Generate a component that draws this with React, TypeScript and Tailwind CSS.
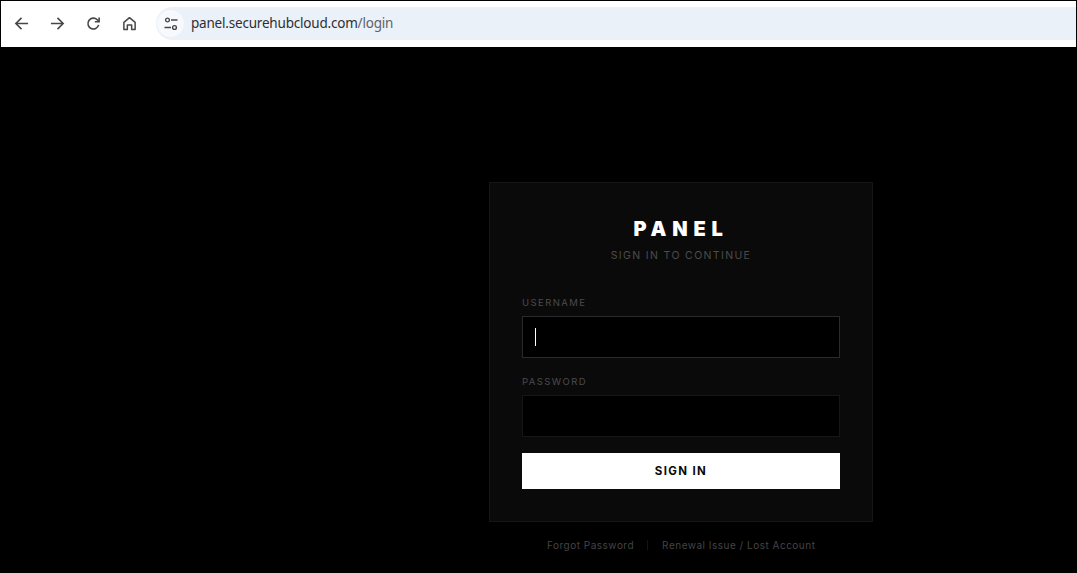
export default function App() {
  return (
    <div className="h-[573px] w-[1077px] overflow-hidden bg-black font-['Inter',sans-serif]">
      <header className="mx-px mt-px flex h-[46px] items-start bg-white">
        <nav className="flex h-[44px] items-center pl-[11px] text-[#474747]">
          <button className="flex w-[18px] justify-center">
            <svg width="15" height="15" viewBox="0 0 16 16" fill="none" stroke="currentColor" strokeWidth="1.7">
              <path d="M15 8H2M8 2L2 8l6 6" />
            </svg>
          </button>
          <button className="ml-[18px] flex w-[18px] justify-center">
            <svg width="15" height="15" viewBox="0 0 16 16" fill="none" stroke="currentColor" strokeWidth="1.7">
              <path d="M1 8h13M8 2l6 6-6 6" />
            </svg>
          </button>
          <button className="ml-[18px] flex w-[18px] justify-center">
            <svg width="15" height="15" viewBox="0 0 16 16" fill="none" stroke="currentColor" strokeWidth="1.7">
              <path d="M13.5 9.5A5.8 5.8 0 1 1 12 4l1.600 1.600" />
              <path d="M14 1.500v4.600H9.400" />
            </svg>
          </button>
          <button className="ml-[18px] flex w-[18px] justify-center">
            <svg width="15" height="15" viewBox="0 0 16 16" fill="none" stroke="currentColor" strokeWidth="1.6" strokeLinejoin="round">
              <path d="M2 14.500V6.800L8 1.800l6 5v7.700h-3.700V9.500H5.700v5z" />
            </svg>
          </button>
        </nav>
        <div className="ml-[18px] mt-[6px] flex h-[33px] flex-1 items-center rounded-l-[17px] bg-[#ebf1f9]">
          <div className="ml-[1px] flex h-[27px] w-[27px] items-center justify-center rounded-full bg-[#f7f9fc] text-[#474747]">
            <svg width="14" height="14" viewBox="0 0 14 14" fill="none" stroke="currentColor" strokeWidth="1.4">
              <circle cx="3.500" cy="3" r="1.900" />
              <path d="M7 3h6.500M0.500 10.500H7" />
              <circle cx="10.500" cy="10.500" r="1.900" />
            </svg>
          </div>
          <span className="ml-[7px] font-['Noto_Sans',sans-serif] text-[13.500px] tracking-[-0.2px] text-[#2b2f33]">
            panel.securehubcloud.com<span className="text-[#5f6368]">/login</span>
          </span>
        </div>
      </header>

      <main className="flex flex-col pl-[489px] pt-[135px]">
        <section className="h-[340px] w-[384px] border border-[#161616] bg-[#0a0a0a] px-[32px] pt-[36px]">
          <h1 className="text-center text-[20px] leading-[20px] font-black tracking-[0.29em] text-white">PANEL</h1>
          <p className="mt-[10px] text-center text-[10.500px] leading-[14px] tracking-[0.13em] text-[#4c4c4c]">SIGN IN TO CONTINUE</p>

          <label className="mt-[33px] block text-[9.500px] leading-[14px] tracking-[0.15em] text-[#4a4a4a]">USERNAME</label>
          <div className="mt-[6px] flex h-[42px] items-center border border-[#2a2a2a] bg-black pl-[12px]">
            <span className="h-[18px] w-px bg-white" />
          </div>

          <label className="mt-[17px] block text-[9.500px] leading-[14px] tracking-[0.15em] text-[#4a4a4a]">PASSWORD</label>
          <div className="mt-[6px] h-[42px] border border-[#161616] bg-black" />

          <button className="mt-[16px] block h-[36px] w-full bg-white pt-[1px] text-center text-[11.500px] font-bold tracking-[0.12em] text-[#0a0a0a]">
            SIGN IN
          </button>
        </section>

        <footer className="mt-[16px] flex w-[384px] items-center text-[10px] leading-[14px] tracking-[0.05em] text-[#444444]">
          <a className="ml-[58px]">Forgot Password</a>
          <span className="ml-[13px] h-[10px] w-px bg-[#141414]" />
          <a className="ml-[14px]">Renewal Issue / Lost Account</a>
        </footer>
      </main>
    </div>
  );
}
